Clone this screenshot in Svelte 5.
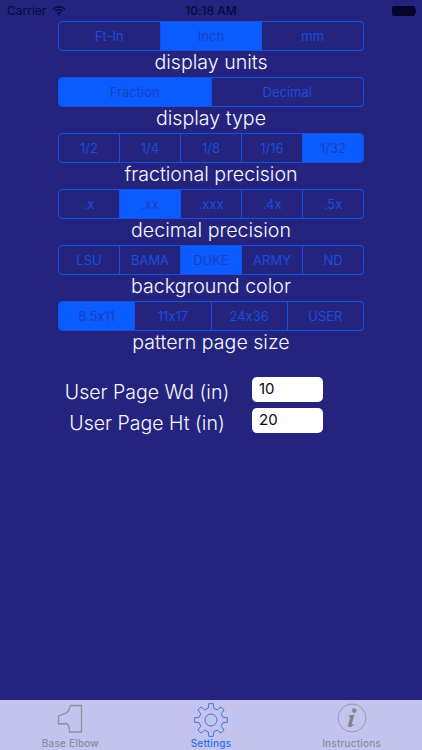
<script>
  const groups = [
    { label: 'display units', items: ['Ft-In', 'Inch', 'mm'], active: 1 },
    { label: 'display type', items: ['Fraction', 'Decimal'], active: 0 },
    { label: 'fractional precision', items: ['1/2', '1/4', '1/8', '1/16', '1/32'], active: 4 },
    { label: 'decimal precision', items: ['.x', '.xx', '.xxx', '.4x', '.5x'], active: 1 },
    { label: 'background color', items: ['LSU', 'BAMA', 'DUKE', 'ARMY', 'ND'], active: 2 },
    { label: 'pattern page size', items: ['8.5x11', '11x17', '24x36', 'USER'], active: 0 }
  ];

  function gearPath(cx, cy, outer, inner, teeth) {
    const step = (Math.PI * 2) / teeth;
    let d = '';
    for (let i = 0; i < teeth; i++) {
      const a = -Math.PI / 2 + i * step;
      const pts = [
        [inner, a - step * 0.3],
        [outer, a - step * 0.17],
        [outer, a + step * 0.17],
        [inner, a + step * 0.3]
      ];
      pts.forEach(([r, t], j) => {
        const x = (cx + r * Math.cos(t)).toFixed(2);
        const y = (cy + r * Math.sin(t)).toFixed(2);
        d += i === 0 && j === 0 ? `M${x} ${y}` : `L${x} ${y}`;
      });
    }
    return d + 'Z';
  }
  const gear = gearPath(17, 17, 16.5, 12, 8);
</script>

<div class="screen">
  <div class="status">
    <div class="left">
      <span>Carrier</span>
      <svg class="wifi" viewBox="0 0 14 11" width="14" height="11">
        <path d="M1 4.2a8.6 8.6 0 0 1 12 0" />
        <path d="M3.1 6.3a5.6 5.6 0 0 1 7.8 0" />
        <path d="M5.2 8.3a2.8 2.8 0 0 1 3.6 0" />
        <circle cx="7" cy="9.8" r="0.9" />
      </svg>
    </div>
    <span class="time">10:18 AM</span>
    <div class="battery"><i></i><b></b></div>
  </div>

  <main>
    {#each groups as g}
      <section>
        <div class="seg">
          {#each g.items as item, i}
            <div class="opt" class:on={i === g.active}>{item}</div>
          {/each}
        </div>
        <div class="label">{g.label}</div>
      </section>
    {/each}

    <div class="fields">
      <div class="field">
        <span>User Page Wd (in)</span>
        <div class="input">10</div>
      </div>
      <div class="field">
        <span>User Page Ht (in)</span>
        <div class="input">20</div>
      </div>
    </div>
  </main>

  <nav>
    <div class="tab">
      <svg viewBox="0 0 26 30" width="26" height="30" class="elbow">
        <path d="M24.5 2.5 H13.5 C12.5 6 11 9 9 10 L1.5 13 V21 L9 20.5 C11.5 21 12.5 24 12.5 29 H24.5 Z" />
      </svg>
      <span>Base Elbow</span>
    </div>
    <div class="tab active">
      <svg viewBox="0 0 34 34" width="34" height="34" class="gear">
        <path d={gear} />
        <circle cx="17" cy="17" r="6" />
      </svg>
      <span>Settings</span>
    </div>
    <div class="tab">
      <svg viewBox="0 0 30 30" width="30" height="30" class="info">
        <circle cx="15" cy="15" r="14" />
        <circle class="dot" cx="17.2" cy="7.6" r="2.3" />
        <path class="dot" d="M11.8 12.6 17.4 11.6 14.8 21.2C14.6 22 15.2 22.2 16.8 21L17.4 21.8C15 24 13 24.4 11.8 24 10.8 23.6 10.8 22.6 11 21.8L13 14.6C13.2 13.8 12.6 13.6 11.7 13.7Z" />
      </svg>
      <span>Instructions</span>
    </div>
  </nav>
</div>

<style>
  :global(body) {
    margin: 0;
  }
  .screen {
    width: 422px;
    height: 750px;
    background: #24247f;
    display: flex;
    flex-direction: column;
    overflow: hidden;
    font-family: Inter, "Liberation Sans", sans-serif;
    font-feature-settings: "calt" 0;
  }
  .status {
    height: 21px;
    flex: none;
    position: relative;
    display: flex;
    align-items: center;
    justify-content: space-between;
    padding: 0 6px 0 7px;
    box-sizing: border-box;
    font-size: 12px;
    color: #08083a;
  }
  .left {
    display: flex;
    align-items: center;
    gap: 6px;
  }
  .wifi {
    fill: none;
    stroke: #08083a;
    stroke-width: 1.4;
  }
  .wifi circle {
    fill: #08083a;
    stroke: none;
  }
  .time {
    position: absolute;
    left: 0;
    right: 0;
    text-align: center;
    font-weight: 500;
  }
  .battery {
    display: flex;
    align-items: center;
  }
  .battery i {
    width: 23px;
    height: 10px;
    background: #04042c;
    border-radius: 2px;
  }
  .battery b {
    width: 1.5px;
    height: 4px;
    background: #04042c;
  }
  main {
    flex: 1;
    display: flex;
    flex-direction: column;
    align-items: center;
  }
  section {
    width: 306px;
    height: 56px;
  }
  .seg {
    height: 30px;
    box-sizing: border-box;
    border: 1.5px solid #1550ea;
    border-radius: 4px;
    display: flex;
    overflow: hidden;
  }
  .opt {
    flex: 1 1 0;
    display: flex;
    align-items: center;
    justify-content: center;
    font-size: 13px;
    color: #1a4cdc;
    border-left: 1px solid #1550ea;
  }
  .opt:first-child {
    border-left: none;
  }
  .opt.on {
    background: #0a5cff;
    color: #1c3fbe;
  }
  .label {
    height: 26px;
    line-height: 22px;
    text-align: center;
    font-size: 19.6px;
    font-weight: 300;
    color: #f8f8ff;
  }
  .fields {
    width: 306px;
    margin-top: 20px;
    display: flex;
    flex-direction: column;
    gap: 6px;
  }
  .field {
    display: flex;
    align-items: flex-start;
    height: 25px;
    color: #f8f8ff;
    font-size: 19.5px;
    font-weight: 300;
  }
  .field span {
    width: 178px;
    line-height: 25px;
    margin-top: 3px;
    text-align: center;
    white-space: nowrap;
  }
  .input {
    margin-left: 16px;
    width: 71px;
    height: 25px;
    box-sizing: border-box;
    padding-left: 7px;
    line-height: 24px;
    background: #fff;
    border-radius: 5px;
    color: #0a0a0a;
    font-size: 15px;
    font-weight: 400;
  }
  nav {
    height: 50px;
    flex: none;
    background: #c3c3ee;
    display: grid;
    grid-template-columns: repeat(3, 1fr);
  }
  .tab {
    position: relative;
    display: flex;
    flex-direction: column;
    align-items: center;
    justify-content: flex-end;
    color: #8b8b9f;
    font-size: 10px;
    font-weight: 500;
    padding-bottom: 1px;
  }
  .tab span {
    line-height: 12px;
    letter-spacing: 0.2px;
  }
  .tab svg {
    position: absolute;
    top: 3px;
  }
  .tab.active {
    color: #2d6fe8;
  }
  .elbow {
    top: 4px;
    fill: none;
    stroke: #8f8f9f;
    stroke-width: 1.3;
  }
  .gear {
    top: 2px;
    fill: none;
    stroke: #3c78e8;
    stroke-width: 1;
    stroke-linejoin: round;
  }
  .info {
    top: 4px;
    fill: none;
    stroke: #9a9aae;
    stroke-width: 1;
  }
  .info .dot {
    fill: #85858f;
    stroke: none;
  }
</style>
